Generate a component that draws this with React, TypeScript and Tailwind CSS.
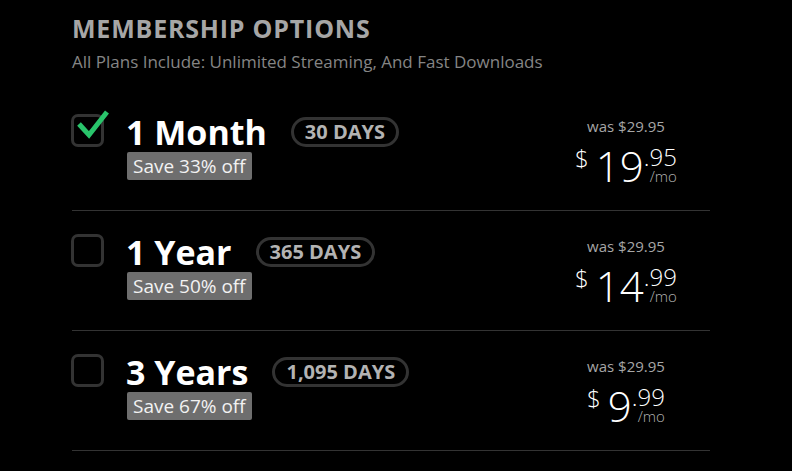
import React from "react";

type Plan = {
  name: string;
  days: string;
  save: string;
  was: string;
  whole: string;
  cents: string;
  checked: boolean;
};

const plans: Plan[] = [
  { name: "1 Month", days: "30 DAYS", save: "Save 33% off", was: "was $29.95", whole: "19", cents: ".95", checked: true },
  { name: "1 Year", days: "365 DAYS", save: "Save 50% off", was: "was $29.95", whole: "14", cents: ".99", checked: false },
  { name: "3 Years", days: "1,095 DAYS", save: "Save 67% off", was: "was $29.95", whole: "9", cents: ".99", checked: false },
];

function Checkbox({ checked }: { checked: boolean }) {
  return (
    <div className="relative w-[33px] h-[33px] shrink-0 -ml-px rounded-[7px] border-[3px] border-[#333333]">
      {checked && (
        <svg
          className="absolute left-[-3px] top-[-3px] overflow-visible"
          width="40"
          height="33"
          viewBox="0 0 40 33"
          fill="none"
        >
          <path d="M8 10 L18 21 L36 -2" stroke="#29c46b" strokeWidth="5" strokeLinejoin="miter" />
        </svg>
      )}
    </div>
  );
}

function PlanRow({ plan }: { plan: Plan }) {
  return (
    <div className="flex items-start h-[120px] pt-[23px] border-b border-[#333333]">
      <Checkbox checked={plan.checked} />
      <div className="flex flex-col ml-[22px]">
        <div className="flex items-center gap-[24px] h-[36px]">
          <span className="text-[34px] font-bold text-white leading-[36px]">{plan.name}</span>
          <span className="rounded-full border-[3px] border-[#333333] px-[11px] h-[30px] flex items-center text-[20px] font-bold text-[#b3b3b3] leading-none">
            {plan.days}
          </span>
        </div>
        <div className="mt-[2px] ml-px">
          <span className="inline-block bg-[#6e6e6e] text-[#f2f2f2] text-[19px] leading-[28px] px-[6px] rounded-[2px]">
            {plan.save}
          </span>
        </div>
      </div>
      <div className="ml-auto mr-[14px] w-[140px] flex flex-col items-center">
        <span className="text-[15px] text-[#a6a6a6] leading-[20px] mt-[2px]">{plan.was}</span>
        <div className="flex items-start font-light text-white mt-[9px]">
          <span className="text-[24px] leading-none mt-[1px] mr-[7px]">$</span>
          <span className="text-[42px] leading-none">{plan.whole}</span>
          <div className="flex flex-col items-end">
            <span className="text-[24px] leading-none">{plan.cents}</span>
            <span className="text-[15px] text-[#b3b3b3] leading-[15px]">/mo</span>
          </div>
        </div>
      </div>
    </div>
  );
}

export default function App() {
  return (
    <div
      className="w-[792px] h-[471px] bg-black overflow-hidden pl-[72px] pt-[12px]"
      style={{ fontFamily: '"Open Sans", "Noto Sans", sans-serif' }}
    >
      <div className="w-[638px]">
        <h1 className="text-[25px] font-bold text-[#a6a6a6] leading-[32px] tracking-[0.8px]">MEMBERSHIP OPTIONS</h1>
        <p className="text-[17px] text-[#858585] leading-[24px] mt-[6px]">
          All Plans Include: Unlimited Streaming, And Fast Downloads
        </p>
        <div className="mt-[17px]">
          {plans.map((p) => (
            <PlanRow key={p.name} plan={p} />
          ))}
        </div>
      </div>
    </div>
  );
}
